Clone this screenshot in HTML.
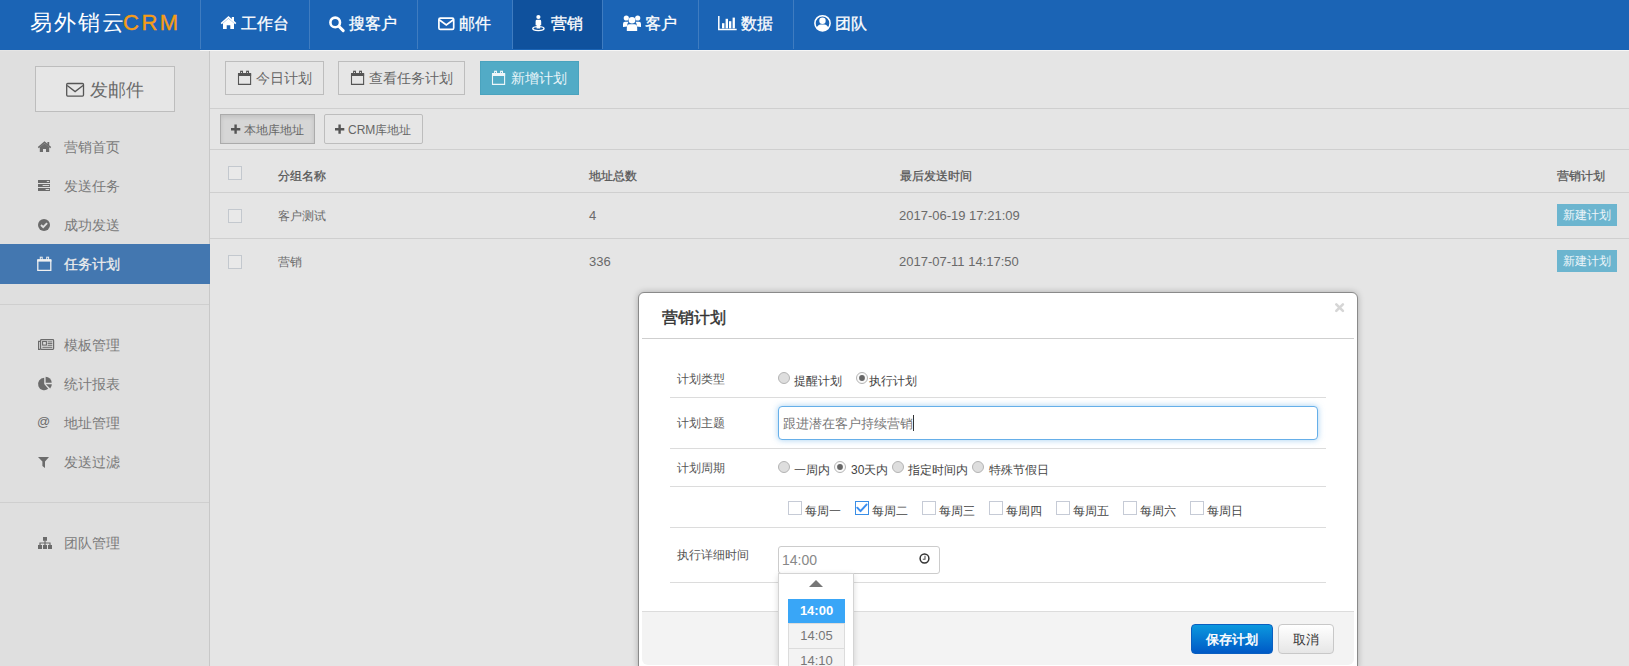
<!DOCTYPE html>
<html><head><meta charset="utf-8">
<style>
*{box-sizing:border-box;margin:0;padding:0}
html,body{width:1629px;height:666px;overflow:hidden;background:#e5e5e5;font-family:"Liberation Sans",sans-serif;position:relative;-webkit-font-smoothing:antialiased}
.a{position:absolute;white-space:nowrap}
svg{display:block}
/* header */
#hdr{left:0;top:0;width:1629px;height:50px;background:#1b64b5}
.sep{top:0;width:1px;height:49px;background:#3f7cc0}
.nav{top:0;height:49px;color:#fff;font-size:16px;line-height:47px}
.navt{top:16px;font-size:16px;line-height:16px;color:#fff;-webkit-text-stroke:0.3px #fff}
/* sidebar */
#side{left:0;top:51px;width:209px;height:615px;background:#dfdfdf}
.sb{left:64px;font-size:14px;line-height:14px;color:#7a7a7a}
.si{left:38px}
.btn{border:1px solid #bdbdbd;background:#e6e6e6;color:#666;font-size:14px;line-height:14px}
.hline{height:1px;background:#cfcfcf}
.th{font-size:12px;line-height:12px;color:#555;-webkit-text-stroke:0.25px #555}
.td{font-size:12px;line-height:12px;color:#6a6a6a}
.cb{width:14px;height:14px;border:1px solid #c3c8ce;background:#e9e9e9}
.nb{width:60px;height:22px;background:#6cb5cf;color:#eef6fa;font-size:12px;line-height:22px;text-align:center}
/* modal */
#modal{left:638px;top:292px;width:720px;height:380px;background:#fff;border:1px solid #8a8a8a;border-radius:6px;box-shadow:0 0 6px rgba(0,0,0,.25)}
.lbl{left:677px;font-size:12px;line-height:12px;color:#555}
.mline{left:670px;width:656px;height:1px;background:#dcdcdc}
.rd{width:12px;height:12px;border-radius:50%;border:1px solid #b4b4b4;background:#dedede}
.rdc{background:#fafafa}
.rt{font-size:12px;line-height:12px;color:#444}
.ck{width:14px;height:14px;border:1px solid #c6cbd6;background:#fff}
</style></head><body>

<!-- header -->
<div class="a" id="hdr"></div>
<div class="a" style="left:200px;top:50px;width:1429px;height:1px;background:#f6f6f6"></div>
<div class="a" style="left:30px;top:12px;font-size:22px;line-height:22px;color:#fff;letter-spacing:1.9px">易外销云</div><div class="a" style="left:123px;top:12px;font-size:22px;line-height:22px;color:#f59c16;letter-spacing:2.5px;-webkit-text-stroke:0.4px #f59c16">CRM</div>

<div class="a" style="left:512px;top:0;width:90px;height:49px;background:#0f519d"></div>
<div class="a sep" style="left:200px"></div>
<div class="a sep" style="left:309px"></div>
<div class="a sep" style="left:417px"></div>
<div class="a sep" style="left:512px"></div>
<div class="a sep" style="left:602px"></div>
<div class="a sep" style="left:698px"></div>
<div class="a sep" style="left:793px"></div>

<div class="a navt" style="left:241px">工作台</div>
<div class="a navt" style="left:349px">搜客户</div>
<div class="a navt" style="left:459px">邮件</div>
<div class="a navt" style="left:551px">营销</div>
<div class="a navt" style="left:645px">客户</div>
<div class="a navt" style="left:741px">数据</div>
<div class="a navt" style="left:835px">团队</div>

<!-- sidebar -->
<div class="a" id="side"></div>
<div class="a" style="left:209px;top:51px;width:1px;height:615px;background:#c8c8c8"></div>
<div class="a btn" style="left:35px;top:66px;width:140px;height:46px;font-size:18px;line-height:18px;color:#6a6a6a"><span class="a" style="left:54px;top:14px">发邮件</span></div>

<div class="a sb" style="top:140px">营销首页</div>
<div class="a sb" style="top:179px">发送任务</div>
<div class="a sb" style="top:218px">成功发送</div>
<div class="a" style="left:0;top:244px;width:210px;height:40px;background:#4377b0"></div>

<div class="a sb" style="top:257px;color:#ededed;-webkit-text-stroke:0.3px #ededed">任务计划</div>
<div class="a hline" style="left:0;top:304px;width:209px"></div>
<div class="a sb" style="top:338px">模板管理</div>
<div class="a sb" style="top:377px">统计报表</div>
<div class="a sb" style="top:416px">地址管理</div>
<div class="a" style="left:37px;top:414px;font-size:13px;line-height:16px;color:#6b6b6b">@</div>
<div class="a sb" style="top:455px">发送过滤</div>
<div class="a hline" style="left:0;top:502px;width:209px"></div>
<div class="a sb" style="top:536px">团队管理</div>

<!-- toolbar -->
<div class="a btn" style="left:225px;top:61px;width:99px;height:34px"><span class="a" style="left:30px;top:9px">今日计划</span></div>
<div class="a btn" style="left:338px;top:61px;width:127px;height:34px"><span class="a" style="left:30px;top:9px">查看任务计划</span></div>
<div class="a btn" style="left:480px;top:61px;width:99px;height:34px;background:#52abc6;border-color:#4aa3be;color:#e9f5f9"><span class="a" style="left:30px;top:9px">新增计划</span></div>
<div class="a hline" style="left:210px;top:108px;width:1419px"></div>
<div class="a btn" style="left:220px;top:114px;width:95px;height:30px;background:#d6d6d6;border-color:#ababab;font-size:12px;line-height:12px;box-shadow:inset 0 2px 4px rgba(0,0,0,.1)"><span class="a" style="left:23px;top:9px">本地库地址</span></div>
<div class="a btn" style="left:324px;top:114px;width:99px;height:30px;font-size:12px;line-height:12px;border-radius:2px"><span class="a" style="left:23px;top:9px">CRM库地址</span></div>
<div class="a hline" style="left:210px;top:149px;width:1419px"></div>

<!-- table -->
<div class="a cb" style="left:228px;top:166px"></div>
<div class="a th" style="left:278px;top:170px">分组名称</div>
<div class="a th" style="left:589px;top:170px">地址总数</div>
<div class="a th" style="left:900px;top:170px">最后发送时间</div>
<div class="a th" style="left:1557px;top:170px">营销计划</div>
<div class="a hline" style="left:210px;top:192px;width:1419px"></div>
<div class="a cb" style="left:228px;top:209px"></div>
<div class="a td" style="left:278px;top:210px">客户测试</div>
<div class="a td" style="left:589px;top:209px;font-size:13px;line-height:13px">4</div>
<div class="a td" style="left:899px;top:209px;font-size:13px;line-height:13px">2017-06-19 17:21:09</div>
<div class="a nb" style="left:1557px;top:204px">新建计划</div>
<div class="a hline" style="left:210px;top:238px;width:1419px"></div>
<div class="a cb" style="left:228px;top:255px"></div>
<div class="a td" style="left:278px;top:256px">营销</div>
<div class="a td" style="left:589px;top:255px;font-size:13px;line-height:13px">336</div>
<div class="a td" style="left:899px;top:255px;font-size:13px;line-height:13px">2017-07-11 14:17:50</div>
<div class="a nb" style="left:1557px;top:250px">新建计划</div>

<!-- modal -->
<div class="a" id="modal"></div>
<div class="a" style="left:662px;top:310px;font-size:16px;line-height:16px;color:#333;-webkit-text-stroke:0.45px #333">营销计划</div>
<div class="a" style="left:642px;top:338px;width:712px;height:1px;background:#cfcfcf"></div>

<div class="a lbl" style="top:373px">计划类型</div>
<div class="a rd" style="left:778px;top:372px"></div>
<div class="a rt" style="left:794px;top:375px">提醒计划</div>
<div class="a rd rdc" style="left:856px;top:372px"></div>
<div class="a rt" style="left:869px;top:375px">执行计划</div>
<div class="a mline" style="top:397px"></div>

<div class="a lbl" style="top:417px">计划主题</div>
<div class="a" style="left:778px;top:406px;width:540px;height:34px;border:1px solid #66afe9;border-radius:4px;box-shadow:0 0 6px rgba(102,175,233,.6);background:#fff"></div>
<div class="a" style="left:783px;top:417px;font-size:13px;line-height:13px;color:#777">跟进潜在客户持续营销</div>
<div class="a" style="left:913px;top:415px;width:1px;height:16px;background:#333"></div>
<div class="a mline" style="top:448px"></div>

<div class="a lbl" style="top:462px">计划周期</div>
<div class="a rd" style="left:778px;top:461px"></div>
<div class="a rt" style="left:794px;top:464px">一周内</div>
<div class="a rd rdc" style="left:834px;top:461px"></div>
<div class="a rt" style="left:851px;top:464px">30天内</div>
<div class="a rd" style="left:892px;top:461px"></div>
<div class="a rt" style="left:908px;top:464px">指定时间内</div>
<div class="a rd" style="left:972px;top:461px"></div>
<div class="a rt" style="left:989px;top:464px">特殊节假日</div>
<div class="a mline" style="top:486px"></div>

<div class="a ck" style="left:788px;top:501px"></div><div class="a rt" style="left:805px;top:505px">每周一</div>
<div class="a ck" style="left:855px;top:501px;border-color:#3a8ee6"></div><div class="a rt" style="left:872px;top:505px">每周二</div>
<div class="a ck" style="left:922px;top:501px"></div><div class="a rt" style="left:939px;top:505px">每周三</div>
<div class="a ck" style="left:989px;top:501px"></div><div class="a rt" style="left:1006px;top:505px">每周四</div>
<div class="a ck" style="left:1056px;top:501px"></div><div class="a rt" style="left:1073px;top:505px">每周五</div>
<div class="a ck" style="left:1123px;top:501px"></div><div class="a rt" style="left:1140px;top:505px">每周六</div>
<div class="a ck" style="left:1190px;top:501px"></div><div class="a rt" style="left:1207px;top:505px">每周日</div>
<div class="a mline" style="top:527px"></div>

<div class="a lbl" style="top:549px">执行详细时间</div>
<div class="a" style="left:778px;top:546px;width:162px;height:28px;border:1px solid #ccc;border-radius:3px;background:#fff"></div>
<div class="a" style="left:782px;top:553px;font-size:14px;line-height:14px;color:#888">14:00</div>
<div class="a mline" style="top:582px"></div>

<!-- footer -->
<div class="a" style="left:642px;top:611px;width:712px;height:1px;background:#dcdcdc"></div>
<div class="a" style="left:642px;top:612px;width:712px;height:53px;background:#f3f3f3;border-radius:0 0 6px 6px"></div>
<div class="a" style="left:1191px;top:624px;width:82px;height:30px;border-radius:4px;background:linear-gradient(#0b98de,#0059c6);border:1px solid #0a5fc0"></div>
<div class="a" style="left:1206px;top:633px;font-size:13px;line-height:13px;color:#fff;-webkit-text-stroke:0.5px #fff">保存计划</div>
<div class="a" style="left:1278px;top:624px;width:56px;height:30px;border-radius:4px;background:linear-gradient(#fff,#e6e6e6);border:1px solid #c8c8c8"></div>
<div class="a" style="left:1293px;top:633px;font-size:13px;line-height:13px;color:#333">取消</div>

<!-- dropdown -->
<div class="a" style="left:778px;top:573px;width:76px;height:100px;background:#fff;border:1px solid #d4d4d4;box-shadow:0 2px 6px rgba(0,0,0,.15)"></div>
<div class="a" style="left:809px;top:580px;width:0;height:0;border-left:7px solid transparent;border-right:7px solid transparent;border-bottom:7px solid #777"></div>
<div class="a" style="left:788px;top:599px;width:57px;height:24px;background:#39a6f7;color:#fff;font-weight:bold;font-size:13px;line-height:24px;text-align:center">14:00</div>
<div class="a" style="left:788px;top:623px;width:57px;height:26px;background:#f3f3f3;border:1px solid #dcdcdc;color:#777;font-size:13px;line-height:23px;text-align:center">14:05</div>
<div class="a" style="left:788px;top:648px;width:57px;height:25px;background:#f3f3f3;border:1px solid #dcdcdc;color:#777;font-size:13px;line-height:23px;text-align:center">14:10</div>


<!-- icons overlay -->
<svg class="a" style="left:0;top:0;z-index:5" width="1629" height="666" viewBox="0 0 1629 666">
<g fill="#fff" stroke="none">
 <!-- home header -->
 <path d="M223,23.2 L228.5,18.4 L234,23.2 L234,29 L230.3,29 L230.3,25.3 L226.7,25.3 L226.7,29 L223,29 Z"/>
 <path d="M221.2,23.6 L228.5,17.2 L235.8,23.6" fill="none" stroke="#fff" stroke-width="1.7"/>
 <rect x="231.8" y="17" width="2.2" height="4"/>
 <!-- search -->
 <circle cx="335.2" cy="22.4" r="4.8" fill="none" stroke="#fff" stroke-width="2.6"/>
 <path d="M338.8,26.2 L343.2,30.6" stroke="#fff" stroke-width="3" stroke-linecap="round"/>
 <!-- envelope header -->
 <rect x="438.9" y="18.2" width="14.8" height="11.2" rx="1.4" fill="none" stroke="#fff" stroke-width="1.7"/>
 <path d="M439.2,19.8 L446.3,25 L453.4,19.8" fill="none" stroke="#fff" stroke-width="1.7"/>
 <!-- street view -->
 <circle cx="538.4" cy="17" r="2.1"/>
 <path d="M535.6,21.2 Q535.6,19.8 537,19.8 L539.8,19.8 Q541.2,19.8 541.2,21.2 L541.2,25.2 L540.2,25.2 L540.2,28.6 L536.6,28.6 L536.6,25.2 L535.6,25.2 Z"/>
 <ellipse cx="538.4" cy="28.6" rx="5.6" ry="2" fill="none" stroke="#fff" stroke-width="1.4"/>
 <!-- users -->
 <circle cx="626.3" cy="18" r="2.6"/>
 <circle cx="637.7" cy="18" r="2.6"/>
 <circle cx="632" cy="20.2" r="3.3"/>
 <path d="M623,27 L623,24 Q623,21.8 625,21.8 L628.5,21.8 Q627,23.5 627.5,26.5 Z"/>
 <path d="M641,27 L641,24 Q641,21.8 639,21.8 L635.5,21.8 Q637,23.5 636.5,26.5 Z"/>
 <path d="M626.8,31 L626.8,28 Q626.8,24.2 629.5,24.2 L634.5,24.2 Q637.2,24.2 637.2,28 L637.2,31 Z"/>
 <!-- bar chart -->
 <path d="M718.8,16 L718.8,29.6 L736.7,29.6" fill="none" stroke="#fff" stroke-width="1.5"/>
 <rect x="722" y="23.2" width="2.4" height="5.2"/>
 <rect x="725.6" y="18.8" width="2.4" height="9.6"/>
 <rect x="729" y="21.2" width="2.3" height="7.2"/>
 <rect x="732.6" y="17.6" width="2.3" height="10.8"/>
 <!-- user circle -->
 <circle cx="822.5" cy="23.3" r="7.6" fill="none" stroke="#fff" stroke-width="1.6"/>
 <circle cx="822.5" cy="20.8" r="3.2"/>
 <path d="M816.6,28.2 Q817.8,24.6 820.6,24.6 L824.4,24.6 Q827.2,24.6 828.4,28.2 Q825.8,30.6 822.5,30.6 Q819.2,30.6 816.6,28.2 Z"/>
</g>
<g fill="#6b6b6b" stroke="none">
 <!-- sidebar home -->
 <path d="M39.8,147.2 L44.5,143.2 L49.2,147.2 L49.2,152 L46,152 L46,149 L43,149 L43,152 L39.8,152 Z"/>
 <path d="M38.3,147.6 L44.5,142.2 L50.7,147.6" fill="none" stroke="#6b6b6b" stroke-width="1.5"/>
 <rect x="47.4" y="142" width="1.8" height="3.4"/>
 <!-- tasks -->
 <rect x="38" y="180" width="12" height="3"/>
 <rect x="38" y="184" width="12" height="3"/>
 <rect x="38" y="188" width="12" height="3"/>
 <rect x="46.8" y="181" width="2.4" height="1" fill="#d8d8d8"/>
 <rect x="42.6" y="185" width="6.6" height="1" fill="#d8d8d8"/>
 <rect x="45.6" y="189" width="3.6" height="1" fill="#d8d8d8"/>
 <!-- check circle -->
 <circle cx="44" cy="225" r="6"/>
 <path d="M41,225 L43.2,227.2 L47.1,223.2" fill="none" stroke="#dedede" stroke-width="1.9"/>
 <!-- newspaper -->
 <rect x="40.6" y="339.6" width="13" height="9.8" rx="0.8" fill="none" stroke="#6b6b6b" stroke-width="1.2"/>
 <path d="M40.6,341.4 L38.6,341.4 L38.6,349.4 L40.6,349.4" fill="none" stroke="#6b6b6b" stroke-width="1.2"/>
 <rect x="42.6" y="341.5" width="3.8" height="3.6" fill="none" stroke="#6b6b6b" stroke-width="1.1"/>
 <path d="M47.6,341.9 H52.3 M47.6,343.6 H52.3 M47.6,345.3 H52.3 M42.4,347.3 H52.3" stroke="#6b6b6b" stroke-width="1"/>
 <!-- pie chart -->
 <path d="M44.2,384 L44.2,377.8 A6.2,6.2 0 1 0 48.2,388.75 Z"/>
 <path d="M45.6,382.8 V376.7 A6.1,6.1 0 0 1 51.7,382.8 Z"/>
 <path d="M45.9,384.3 H51.8 A6,6 0 0 1 50.2,388.4 Z"/>
 <!-- filter -->
 <path d="M38,457 L49,457 L45,461.6 L45,468 L42.4,466 L42.4,461.6 Z"/>
 <!-- sitemap -->
 <rect x="43" y="537" width="4" height="3.8"/>
 <rect x="38" y="545" width="4" height="4"/>
 <rect x="43" y="545" width="4" height="4"/>
 <rect x="48" y="545" width="4" height="4"/>
 <path d="M45,540.5 V545 M40,545 V543 H50 V545" fill="none" stroke="#6b6b6b" stroke-width="1.2"/>
 <!-- envelope big button -->
 <rect x="66.7" y="83.5" width="16.8" height="12.6" rx="1" fill="none" stroke="#555" stroke-width="1.3"/>
 <path d="M67.2,85.6 L75.1,91.6 L83,85.6" fill="none" stroke="#555" stroke-width="1.3"/>
</g>
<!-- calendar active sidebar (white) -->
<g fill="none" stroke="#f0f0f0">
 <path d="M37.8,260 V270.4 H50.8 V260" stroke-width="1.3"/>
 <rect x="37.2" y="259.1" width="14.2" height="2.5" fill="#f0f0f0" stroke="none"/>
 <rect x="40.3" y="257.2" width="1.9" height="3.2" stroke-width="1"/>
 <rect x="46.7" y="257.2" width="1.9" height="3.2" stroke-width="1"/>
</g>
<!-- toolbar calendars -->
<g fill="none" stroke="#555">
 <path d="M238.5,73.5 V84.4 H250.6 V73.5" stroke-width="1.1"/>
 <rect x="238" y="73" width="13.1" height="3" fill="#555" stroke="none"/>
 <rect x="240.6" y="71.2" width="1.9" height="2.6" stroke-width="1"/>
 <rect x="246.6" y="71.2" width="1.9" height="2.6" stroke-width="1"/>
</g>
<g fill="none" stroke="#555">
 <path d="M351.5,73.5 V84.4 H363.6 V73.5" stroke-width="1.1"/>
 <rect x="351" y="73" width="13.1" height="3" fill="#555" stroke="none"/>
 <rect x="353.6" y="71.2" width="1.9" height="2.6" stroke-width="1"/>
 <rect x="359.6" y="71.2" width="1.9" height="2.6" stroke-width="1"/>
</g>
<g fill="none" stroke="#eef6f9">
 <path d="M492.5,73.5 V84.4 H504.6 V73.5" stroke-width="1.1"/>
 <rect x="492" y="73" width="13.1" height="3" fill="#eef6f9" stroke="none"/>
 <rect x="494.6" y="71.2" width="1.9" height="2.6" stroke-width="1"/>
 <rect x="500.6" y="71.2" width="1.9" height="2.6" stroke-width="1"/>
</g>
<!-- plus -->
<path d="M231,129.2 H240.3 M235.6,124.6 V133.8" stroke="#555" stroke-width="2.4"/>
<path d="M335,129.2 H344.3 M339.6,124.6 V133.8" stroke="#555" stroke-width="2.4"/>
<!-- modal: radios checked dots -->
<circle cx="862" cy="378" r="2.9" fill="#666"/>
<circle cx="840" cy="467" r="2.9" fill="#666"/>
<!-- checkbox check -->
<path d="M857.3,507.7 L860.5,511.2 L866.5,504.6" fill="none" stroke="#3a8ef0" stroke-width="2" stroke-linecap="round" stroke-linejoin="round"/>
<!-- close x -->
<path d="M1336.3,304.3 L1342.9,310.9 M1342.9,304.3 L1336.3,310.9" stroke="#d6d6d6" stroke-width="2.6" stroke-linecap="round"/>
<!-- clock -->
<circle cx="924.5" cy="558.5" r="4.4" fill="none" stroke="#333" stroke-width="1.5"/>
<path d="M925,555.8 V559.3 H922.8" fill="none" stroke="#555" stroke-width="1.1"/>
</svg>
</body></html>
